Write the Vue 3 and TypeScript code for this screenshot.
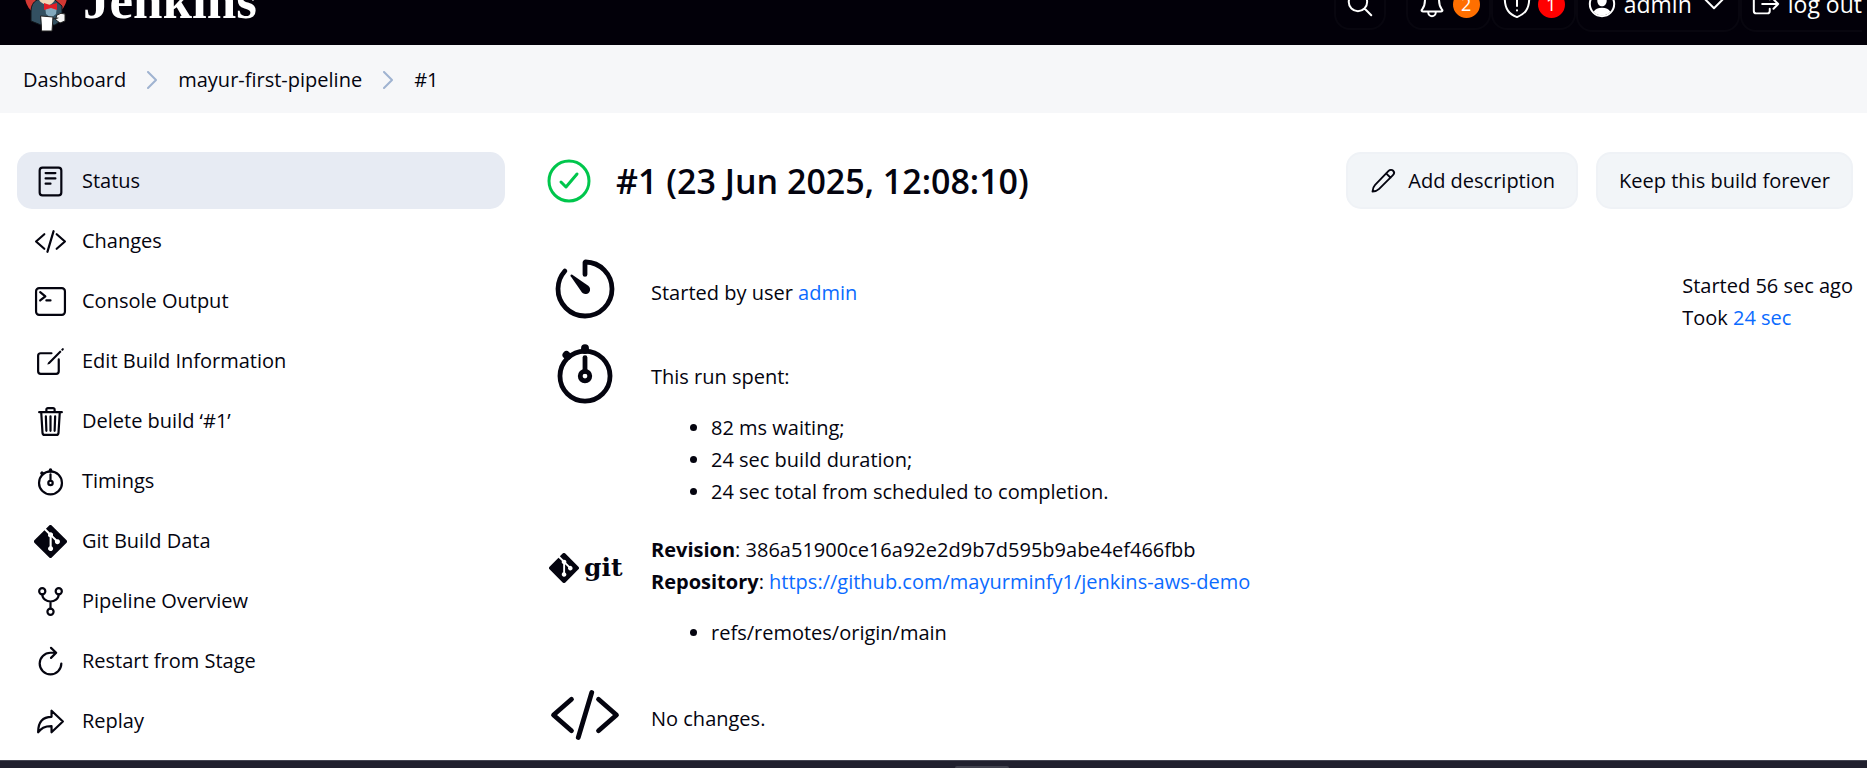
<script setup lang="ts">
import { ref } from 'vue'

interface Task {
  label: string
  icon: string
}

const tasks: Task[] = [
  { label: 'Status', icon: 'status' },
  { label: 'Changes', icon: 'code' },
  { label: 'Console Output', icon: 'terminal' },
  { label: 'Edit Build Information', icon: 'edit' },
  { label: 'Delete build ‘#1’', icon: 'trash' },
  { label: 'Timings', icon: 'timings' },
  { label: 'Git Build Data', icon: 'git' },
  { label: 'Pipeline Overview', icon: 'fork' },
  { label: 'Restart from Stage', icon: 'restart' },
  { label: 'Replay', icon: 'replay' },
]

const active = ref('Status')
const timings: string[] = [
  '82 ms waiting;',
  '24 sec build duration;',
  '24 sec total from scheduled to completion.',
]
</script>

<template>
  <div class="page">
    <svg class="defs" aria-hidden="true">
      <symbol id="i-status" viewBox="0 0 512 512">
        <rect x="88" y="40" width="336" height="432" rx="44" />
        <path d="M180 126h152M180 208h152M180 290h76" />
      </symbol>
      <symbol id="i-code" viewBox="0 0 512 512">
        <path d="M160 368L32 256l128-112M352 368l128-112-128-112M304 96l-96 320" />
      </symbol>
      <symbol id="i-terminal" viewBox="0 0 512 512">
        <rect x="32" y="48" width="448" height="416" rx="48" />
        <path d="M96 112l80 64-80 64M192 240h64" />
      </symbol>
      <symbol id="i-edit" viewBox="0 0 512 512">
        <path d="M384 224v184a40 40 0 01-40 40H104a40 40 0 01-40-40V168a40 40 0 0140-40h167" />
        <path class="solid" d="M459.94 53.25a16.06 16.06 0 00-23.22-.56L424.35 65a8 8 0 000 11.31l11.34 11.32a8 8 0 0011.34 0l12.06-12c6.1-6.09 6.67-16.01.85-22.38zM399.34 90L218.82 270.2a9 9 0 00-2.31 3.93L208.16 299a3.91 3.91 0 004.86 4.86l24.85-8.35a9 9 0 003.93-2.31L422 112.66a9 9 0 000-12.66l-9.95-10a9 9 0 00-12.71 0z" />
      </symbol>
      <symbol id="i-trash" viewBox="0 0 512 512">
        <path d="M112 112l20 320c.95 18.49 14.4 32 32 32h184c17.67 0 30.87-13.51 32-32l20-320M80 112h352M192 112V72a23.93 23.93 0 0124-24h80a23.93 23.93 0 0124 24v40M256 176v224M184 176l8 224M328 176l-8 224" />
      </symbol>
      <symbol id="i-timings" viewBox="0 0 512 512">
        <circle cx="256" cy="278" r="178" />
        <circle cx="256" cy="278" r="34" />
        <path d="M256 244V146" />
        <path class="knob" d="M256 92V80M132 136l-8-8" />
      </symbol>
      <symbol id="i-git" viewBox="0 0 92 92">
        <path class="solid" d="M90.2 41.9L50 1.8a5.9 5.9 0 00-8.3 0l-8.4 8.4 10.600 10.600a7 7 0 018.900 8.900L63 39.900a7 7 0 11-4.200 4L49.300 34.400v25.100a7 7 0 11-5.800-.2V34a7 7 0 01-3.800-9.200L29.200 14.300 1.700 41.800a5.900 5.900 0 000 8.300l40.200 40.100a5.900 5.900 0 008.300 0l40-40a5.900 5.900 0 000-8.300z" />
      </symbol>
      <symbol id="i-fork" viewBox="0 0 512 512">
        <circle cx="128" cy="96" r="48" /><circle cx="256" cy="416" r="48" /><circle cx="384" cy="96" r="48" />
        <path d="M256 256v112M128 144c0 74.670 68.920 112 128 112M384 144c0 74.670-68.920 112-128 112" />
      </symbol>
      <symbol id="i-restart" viewBox="0 0 512 512">
        <path d="M424 288a168 168 0 11-168-168h84M264 44l80 76-80 80" />
      </symbol>
      <symbol id="i-replay" viewBox="0 0 512 512">
        <path d="M448 256L272 88v96C103.570 184 64 304.770 64 424c48.610-62.240 91.600-96 208-96v96z" />
      </symbol>
      <symbol id="i-timer" viewBox="0 0 512 512">
        <path d="M112.910 128A191.850 191.850 0 0064 254c-1.180 106.350 85.650 193.800 192 194 106.200.2 192-85.830 192-192 0-104.540-83.550-189.610-187.500-192a4.360 4.360 0 00-4.500 4.370V152" />
        <path class="solid" d="M233.380 278.630l-79-113a8.130 8.130 0 0111.320-11.320l113 79a32.500 32.500 0 01-37.250 53.260 33.210 33.210 0 01-8.070-7.940z" />
      </symbol>
      <symbol id="i-pencil" viewBox="0 0 512 512">
        <path d="M358 72c24-24 62-26 84-4s20 58-4 82L186 400c-32 32-88 46-122 48 2-34 16-90 48-122zM312 116l84 80" />
      </symbol>
      <symbol id="i-search" viewBox="0 0 512 512">
        <path d="M221 64a157 157 0 10157 157A157 157 0 00221 64zM338 338l110 110" />
      </symbol>
      <symbol id="i-bell" viewBox="0 0 512 512">
        <path d="M428 352c-32-40-52-60-52-158 0-88-46-120-82-136-4-2-8-8-10-12-6-18-20-14-28-14s-22-4-28 14c-2 4-6 10-10 12-36 16-82 48-82 136 0 98-20 118-52 158-14 18-2 32 22 32h300c24 0 36-14 22-32zM320 384v16a64 64 0 01-128 0v-16" />
      </symbol>
      <symbol id="i-shield" viewBox="0 0 512 512">
        <path d="M463 112c-90-10-130-20-207-64-77 44-117 54-207 64-16 252 94 322 207 368 113-46 223-116 207-368zM256 160v130M256 362v4" />
      </symbol>
      <symbol id="i-user" viewBox="0 0 512 512">
        <circle cx="256" cy="256" r="208" />
        <path class="solid" d="M256 120c-50 0-84 38-80 88 4 48 38 88 80 88s76-40 80-88c4-50-30-88-80-88zM256 320c-70 0-118 26-142 70 36 42 88 66 142 66s106-24 142-66c-24-44-72-70-142-70z" />
      </symbol>
      <symbol id="i-logout" viewBox="0 0 512 512">
        <path d="M320 176v-40a40 40 0 00-40-40H88a40 40 0 00-40 40v240a40 40 0 0040 40h192a40 40 0 0040-40v-40M384 176l80 80-80 80M191 256h273" />
      </symbol>
      <symbol id="i-down" viewBox="0 0 512 512">
        <path d="M112 184l144 144 144-144" />
      </symbol>
    </svg>

    <header class="top">
      <div class="top-inner">
        <a class="brand" href="#">
          <svg class="butler" viewBox="0 0 44 60" aria-hidden="true">
            <circle cx="22" cy="24" r="21" fill="#d33833" />
            <path d="M13 28c-4 2-6 6-6 12v9l10 4h14l7-5V34l-7-6z" fill="#335061" stroke="#10151a" stroke-width="1" />
            <path d="M14 12q8-8 17 0l1 14q-4 8-9 7-8-2-9-8z" fill="#f0d6b7" />
            <path d="M21 34l6 2 6-2-1 8-5 4-5-4z" fill="#83a9bd" />
            <path d="M20 31l6 2 7-2v7l-6-2-7 2z" fill="#e01f26" />
            <path d="M17 44l12 1-1 14H18z" fill="#fff" stroke="#222" stroke-width="1" />
            <path d="M29 47l5-1M33 43q4-3 8-1v7l-5 2-4-3z" fill="#f5f5f5" stroke="#222" stroke-width="1" />
          </svg>
          <span>Jenkins</span>
        </a>
        <nav class="tools">
          <button class="tool tool-search" type="button" aria-label="Search"><svg class="ic"><use href="#i-search" /></svg></button>
          <button class="tool" type="button" aria-label="Notifications"><svg class="ic"><use href="#i-bell" /></svg><span class="badge">2</span></button>
          <button class="tool" type="button" aria-label="Security warnings"><svg class="ic"><use href="#i-shield" /></svg><span class="badge red">1</span></button>
          <button class="tool tool-wide" type="button"><svg class="ic"><use href="#i-user" /></svg>admin<svg class="ic"><use href="#i-down" /></svg></button>
          <a class="tool tool-wide tool-out" href="#"><svg class="ic"><use href="#i-logout" /></svg>log out</a>
        </nav>
      </div>
    </header>

    <nav class="crumbs" aria-label="Breadcrumb">
      <a href="#">Dashboard</a>
      <svg class="sep" viewBox="0 0 10 18"><path d="M1 1l8 8-8 8" /></svg>
      <a href="#">mayur-first-pipeline</a>
      <svg class="sep" viewBox="0 0 10 18"><path d="M1 1l8 8-8 8" /></svg>
      <a href="#">#1</a>
    </nav>

    <div class="body">
      <nav class="side" aria-label="Build">
        <a
          v-for="task in tasks"
          :key="task.label"
          href="#"
          class="task"
          :class="{ active: task.label === active }"
          @click.prevent="active = task.label"
        >
          <svg class="task-icon"><use :href="'#i-' + task.icon" /></svg>
          {{ task.label }}
        </a>
      </nav>

      <main class="main">
        <div class="head">
          <svg class="ok" viewBox="0 0 44 44" role="img" aria-label="Success">
            <circle cx="22" cy="22" r="20" /><path d="M14 23l5 5L30 15" />
          </svg>
          <h1>#1 (23 Jun 2025, 12:08:10)</h1>
          <div class="actions">
            <button class="btn" type="button"><svg class="ic-small"><use href="#i-pencil" /></svg>Add description</button>
            <button class="btn" type="button">Keep this build forever</button>
          </div>
        </div>

        <div class="content">
          <div class="rows">
            <section class="row">
              <svg class="big"><use href="#i-timer" /></svg>
              <div class="text"><p>Started by user <a href="#">admin</a></p></div>
            </section>
            <section class="row">
              <svg class="big"><use href="#i-timings" /></svg>
              <div class="text">
                <p>This run spent:</p>
                <ul><li v-for="line in timings" :key="line">{{ line }}</li></ul>
              </div>
            </section>
            <section class="row row-git">
              <div class="gitlogo"><svg><use href="#i-git" /></svg><span>git</span></div>
              <div class="text">
                <p><b>Revision</b>: 386a51900ce16a92e2d9b7d595b9abe4ef466fbb</p>
                <p><b>Repository</b>: <a href="#">https://github.com/mayurminfy1/jenkins-aws-demo</a></p>
                <ul><li>refs/remotes/origin/main</li></ul>
              </div>
            </section>
            <section class="row">
              <svg class="big"><use href="#i-code" /></svg>
              <div class="text"><p>No changes.</p></div>
            </section>
          </div>
          <aside class="when">
            <p>Started 56 sec ago</p>
            <p>Took <a href="#">24 sec</a></p>
          </aside>
        </div>
      </main>
    </div>

    <footer class="dock"><span class="handle"></span></footer>
  </div>
</template>

<style>
body {
  margin: 0;
  background: #fff;
}
</style>

<style scoped>
.page {
  display: flex;
  flex-direction: column;
  min-height: 100vh;
  font-family: "Segoe UI", "Open Sans", "Noto Sans", sans-serif;
  font-size: 20px;
  line-height: 32px;
  color: #04040f;
}
.defs {
  position: absolute;
  width: 0;
  height: 0;
}
svg {
  display: block;
  flex: none;
  fill: none;
  stroke: currentColor;
  stroke-width: 34px;
  stroke-linecap: round;
  stroke-linejoin: round;
}
.solid {
  fill: currentColor;
  stroke: none;
}
.knob {
  stroke-width: 56px;
}
a {
  color: inherit;
  text-decoration: none;
}
p, ul, h1 {
  margin: 0;
}
button {
  font: inherit;
  color: inherit;
  cursor: pointer;
}
.top {
  display: flex;
  align-items: flex-end;
  height: 45px;
  overflow: hidden;
  background: #020009;
  color: #fff;
}
.top-inner {
  display: flex;
  flex: 1;
  align-items: center;
  justify-content: space-between;
  height: 82px;
  padding: 0 5px 0 24px;
}
.brand {
  display: flex;
  align-items: center;
  gap: 15px;
  padding-bottom: 4px;
  font: bold 53px/48px "Liberation Serif", serif;
}
.brand span {
  padding-bottom: 5px;
}
.butler {
  width: 44px;
  height: 60px;
  stroke: none;
}
.tools {
  display: flex;
  align-items: center;
}
.tool {
  display: flex;
  align-items: center;
  gap: 6px;
  box-sizing: border-box;
  height: 52px;
  padding: 0 9px;
  border: 2px solid #08060f;
  border-radius: 16px;
  background: none;
  white-space: nowrap;
}
.tool-search {
  margin-right: 20px;
}
.tool-wide {
  gap: 7px;
  height: 56px;
  font-size: 23px;
}
.tool-out {
  padding-right: 0;
  border-right: 0;
  border-radius: 16px 0 0 16px;
}
.ic {
  width: 30px;
  height: 30px;
}
.ic-small {
  width: 28px;
  height: 28px;
}
.badge {
  width: 27px;
  height: 27px;
  border-radius: 50%;
  background: #ff6f00;
  font-size: 18px;
  line-height: 27px;
  text-align: center;
}
.badge.red {
  background: #f00;
}
.crumbs {
  display: flex;
  align-items: center;
  gap: 21px;
  box-sizing: border-box;
  height: 68px;
  padding: 1px 23px 0;
  background: #f6f7f9;
}
.sep {
  width: 10px;
  height: 18px;
  stroke: #9fb3d1;
  stroke-width: 2px;
}
.body {
  display: flex;
  flex: 1;
  gap: 42px;
  padding: 39px 14px 8px 17px;
}
.side {
  display: flex;
  flex: none;
  flex-direction: column;
  gap: 3px;
  width: 488px;
}
.task {
  display: flex;
  align-items: center;
  gap: 15px;
  box-sizing: border-box;
  height: 57px;
  padding: 1px 17px 0;
  border-radius: 15px;
}
.task.active {
  background: #e7ebf3;
}
.task-icon {
  width: 33px;
  height: 33px;
}
.main {
  flex: 1;
  min-width: 0;
}
.head {
  display: flex;
  align-items: center;
  height: 57px;
  margin-bottom: 44px;
}
.ok {
  width: 44px;
  height: 44px;
  stroke: #00c64c;
  stroke-width: 3px;
}
h1 {
  margin-left: 25px;
  font-size: 34px;
  font-weight: 600;
  line-height: 48px;
}
.actions {
  display: flex;
  gap: 18px;
  margin-left: auto;
}
.btn {
  display: flex;
  align-items: center;
  gap: 11px;
  box-sizing: border-box;
  height: 57px;
  padding: 1px 21px 0;
  border: 2px solid #eff2f6;
  border-radius: 15px;
  background: #f2f5f8;
  white-space: nowrap;
}
.content {
  display: flex;
  justify-content: space-between;
}
.rows {
  display: flex;
  flex-direction: column;
  gap: 12px;
}
.row {
  display: flex;
  gap: 28px;
}
.big {
  width: 76px;
  height: 72px;
}
.text {
  padding-top: 24px;
}
.row-git {
  padding-bottom: 6px;
}
.row-git .text {
  padding-top: 2px;
}
ul {
  margin: 19px 0 12px;
  padding-left: 60px;
}
.text a,
.when a {
  color: #0b6bff;
}
.gitlogo {
  display: flex;
  align-items: center;
  gap: 5px;
  box-sizing: border-box;
  width: 76px;
  height: 72px;
  padding-left: 2px;
  font: bold 25px/32px "DejaVu Serif", serif;
}
.gitlogo svg {
  width: 30px;
  height: 30px;
}
.when {
  padding-top: 17px;
  white-space: nowrap;
}
.dock {
  display: flex;
  justify-content: center;
  align-items: flex-end;
  box-sizing: border-box;
  height: 8px;
  padding-left: 97px;
  border-top: 1px solid #454653;
  background: #20202e;
}
.handle {
  width: 54px;
  height: 2px;
  border-radius: 4px 4px 0 0;
  background: #41424e;
}
</style>
